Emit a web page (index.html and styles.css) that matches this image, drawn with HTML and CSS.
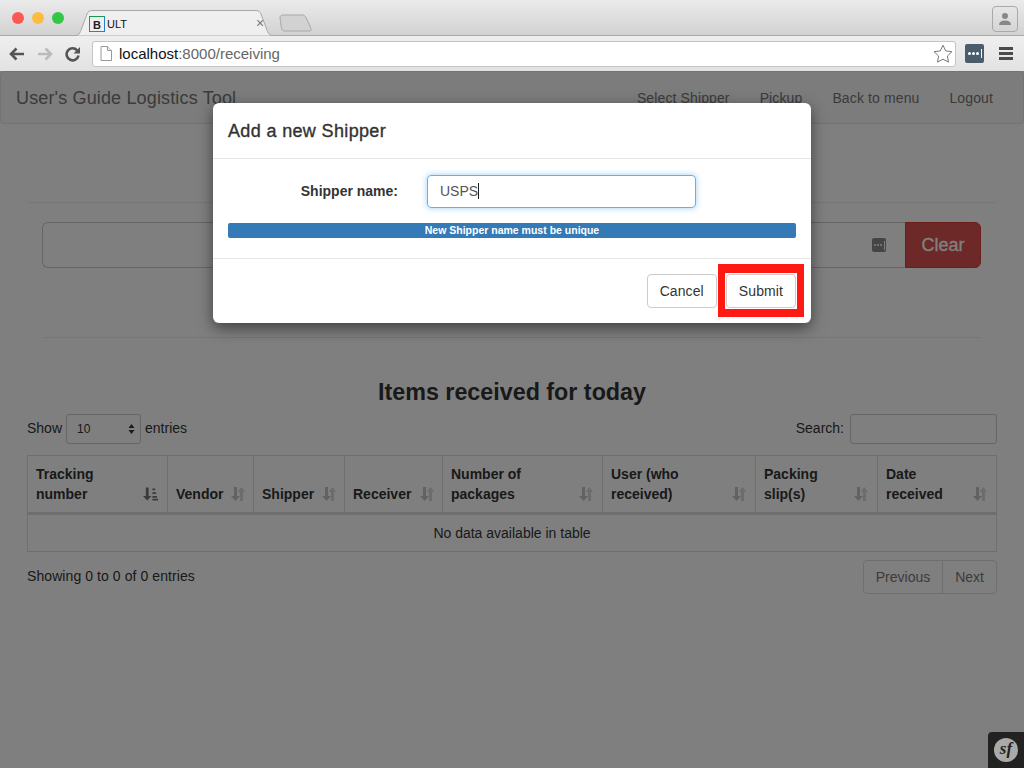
FILE: index.html
```html
<!DOCTYPE html>
<html lang="en">
<head>
    <meta charset="UTF-8">
    <title>ULT</title>
    <link rel="stylesheet" href="styles.css">
</head>
<body>
    <div class="tabbar">
        <div class="lights">
            <span class="light light-red"></span>
            <span class="light light-yellow"></span>
            <span class="light light-green"></span>
        </div>
        <div class="tab">
            <svg class="tab-shape" width="206" height="26" viewBox="0 0 206 26"><path d="M0 25.5h3c3 0 4.500-1.500 5.500-4L15 4c1-2.500 2.500-3.500 5-3.500h164c2.500 0 4 1 5 3.500l6.500 17.500c1 2.500 2.500 4 5.500 4h5" fill="#efefef" stroke="#a9a9a9"/></svg>
            <span class="favicon">B</span>
            <span class="tab-title">ULT</span>
            <span class="tab-close">×</span>
        </div>
        <svg class="newtab" width="34" height="18" viewBox="0 0 34 18"><path d="M1 4c0-2 1-3 3-3h19c2 0 3 .8 4 2.500l5 11c.6 1.500 0 2.500-2 2.500H6c-2 0-3-1-3.500-3z" fill="#d2d2d2" stroke="#a8a8a8"/></svg>
        <div class="profile">
            <svg width="14" height="14" viewBox="0 0 14 14"><circle cx="7" cy="4" r="3" fill="#888"/><path d="M1 13c0-3 2-4.500 6-4.500s6 1.500 6 4.500z" fill="#888"/></svg>
        </div>
    </div>
    <div class="toolbar">
        <svg class="tool" width="18" height="16" viewBox="0 0 18 16"><path d="M16 8H3M8.500 2.500L3 8l5.500 5.500" fill="none" stroke="#555" stroke-width="2.600"/></svg>
        <svg class="tool" width="18" height="16" viewBox="0 0 18 16"><path d="M2 8h13M9.500 2.500L15 8l-5.500 5.500" fill="none" stroke="#bbb" stroke-width="2.600"/></svg>
        <svg class="tool" width="18" height="16" viewBox="0 0 18 16"><path d="M14.500 9.500a6 6 0 1 1-1.400-5.200" fill="none" stroke="#555" stroke-width="2.600"/><path d="M16 1v6.500H9.500z" fill="#555"/></svg>
        <div class="urlbar">
            <svg width="12" height="15" viewBox="0 0 12 15"><path d="M1 .5h6.500l4 4v10H1z" fill="#fff" stroke="#999"/><path d="M7.500.5v4h4" fill="#eee" stroke="#999"/></svg>
            <span class="url"><span class="url-host">localhost</span>:8000/receiving</span>
            <svg class="star" width="20" height="19" viewBox="0 0 20 19"><path d="M10 1.200l2.700 5.700 6.200.8-4.500 4.300 1.100 6.100L10 15.200l-5.500 2.900 1.100-6.100L1.100 7.700l6.200-.8z" fill="#fff" stroke="#777"/></svg>
        </div>
        <div class="lastpass"><span></span><span></span><span></span><i></i></div>
        <div class="burger"><span></span><span></span><span></span></div>
    </div>

    <div class="page">
        <nav class="navbar">
            <a class="brand">User's Guide Logistics Tool</a>
            <div class="nav-links">
                <a>Select Shipper</a>
                <a>Pickup</a>
                <a>Back to menu</a>
                <a>Logout</a>
            </div>
        </nav>

        <div class="main">
            <hr class="rule-wide">
            <div class="scan-group">
                <div class="scan-input">
                    <div class="lastpass lastpass-small"><span></span><span></span><span></span><i></i></div>
                </div>
                <button class="btn-clear">Clear</button>
            </div>
            <hr class="rule-narrow">

            <h2 class="table-title">Items received for today</h2>

            <div class="table-controls">
                <div class="length">
                    <span class="length-text">Show</span>
                    <div class="select-box">
                        <span>10</span>
                        <svg width="7" height="12" viewBox="0 0 7 12"><path d="M3.500 1L6.500 5h-6zM3.500 11L.5 7h6z" fill="#333"/></svg>
                    </div>
                    <span class="length-text">entries</span>
                </div>
                <div class="length">
                    <span class="length-text">Search:</span>
                    <div class="search-box"></div>
                </div>
            </div>

            <table class="data-table">
                <colgroup>
                    <col class="col-1"><col class="col-2"><col class="col-3"><col class="col-4">
                    <col class="col-5"><col class="col-6"><col class="col-7"><col class="col-8">
                </colgroup>
                <thead>
                    <tr>
                        <th><div class="th-in"><span>Tracking number</span><svg class="sort-active" width="15" height="14" viewBox="0 0 16 14"><path d="M3 0h3v9h3l-4.500 5L0 9h3z" fill="#777"/><path d="M10 1h3v2h-3zM10 5h4v2h-4zM10 9h5v2h-5zM10 12h6v2h-6z" fill="#777"/></svg></div></th>
                        <th class="th-tight"><div class="th-in"><span>Vendor</span><svg class="sort" width="14" height="14" viewBox="0 0 14 14"><use href="#sort-icon"/></svg></div></th>
                        <th class="th-tight"><div class="th-in"><span>Shipper</span><svg class="sort" width="14" height="14" viewBox="0 0 14 14"><use href="#sort-icon"/></svg></div></th>
                        <th class="th-tight"><div class="th-in"><span>Receiver</span><svg class="sort" width="14" height="14" viewBox="0 0 14 14"><use href="#sort-icon"/></svg></div></th>
                        <th><div class="th-in"><span>Number of packages</span><svg class="sort" width="14" height="14" viewBox="0 0 14 14"><use href="#sort-icon"/></svg></div></th>
                        <th><div class="th-in"><span>User (who received)</span><svg class="sort" width="14" height="14" viewBox="0 0 14 14"><use href="#sort-icon"/></svg></div></th>
                        <th><div class="th-in"><span>Packing slip(s)</span><svg class="sort" width="14" height="14" viewBox="0 0 14 14"><use href="#sort-icon"/></svg></div></th>
                        <th><div class="th-in"><span>Date received</span><svg class="sort" width="14" height="14" viewBox="0 0 14 14"><use href="#sort-icon"/></svg></div></th>
                    </tr>
                </thead>
                <tbody>
                    <tr><td colspan="8">No data available in table</td></tr>
                </tbody>
            </table>

            <div class="table-footer">
                <div class="table-info">Showing 0 to 0 of 0 entries</div>
                <div class="pagination"><a>Previous</a><a>Next</a></div>
            </div>
        </div>

        <svg class="icon-defs" width="0" height="0">
            <symbol id="sort-icon" viewBox="0 0 14 14">
                <path d="M3 0h3v9h3l-4.500 5L0 9h3z" fill="#c4c4c4"/>
                <path d="M9 14V5H6.500L10.500 0 14 5h-2v9z" fill="#d8d8d8"/>
            </symbol>
        </svg>

        <div class="backdrop">
            <div class="modal">
                <div class="modal-header">Add a new Shipper</div>
                <div class="modal-body">
                    <div class="form-row">
                        <label class="form-label">Shipper name:</label>
                        <div class="form-input">USPS<span class="caret"></span></div>
                    </div>
                    <div class="progress">New Shipper name must be unique</div>
                </div>
                <div class="modal-footer">
                    <button class="btn">Cancel</button>
                    <button class="btn">Submit</button>
                    <div class="highlight"></div>
                </div>
            </div>
        </div>

        <div class="sf-toolbar"><span class="sf-logo">sf</span></div>
    </div>
</body>
</html>
```

FILE: styles.css
```css
* {
    box-sizing: border-box;
}

html, body {
    height: 100%;
}

body {
    margin: 0;
    font-family: "Liberation Sans", Arial, sans-serif;
    font-size: 14px;
    line-height: 20px;
    color: #333;
    background-color: white;
    display: flex;
    flex-direction: column;
    overflow: hidden;
}

/* browser chrome */
.tabbar {
    height: 36px;
    flex: none;
    display: flex;
    align-items: flex-end;
    padding-left: 12px;
    background: linear-gradient(#ebebeb, #d2d2d2);
    border-bottom: 1px solid #a9a9a9;
}

.lights {
    display: flex;
    gap: 8px;
    align-self: flex-start;
    margin-top: 12px;
}

.light {
    width: 12px;
    height: 12px;
    border-radius: 50%;
}

.light-red {
    background-color: #fc5753;
}

.light-yellow {
    background-color: #fdbc40;
}

.light-green {
    background-color: #33c748;
}

.tab {
    position: relative;
    width: 206px;
    height: 26px;
    margin-left: 8px;
    margin-bottom: -1px;
    display: flex;
    align-items: center;
    padding-left: 17px;
    padding-top: 1px;
    font-size: 11px;
    color: #111;
}

.tab-shape {
    position: absolute;
    left: 0;
    top: 0;
}

.favicon {
    position: relative;
    width: 16px;
    height: 16px;
    border: 1.500px solid #1a9a50;
    border-right-color: #2a7fc9;
    border-bottom-color: #2a7fc9;
    font-size: 11px;
    font-weight: bold;
    line-height: 16px;
    text-align: center;
    color: #222;
}

.tab-title {
    position: relative;
    margin-left: 2px;
}

.tab-close {
    position: absolute;
    left: 184px;
    top: 3px;
    font-size: 14px;
    color: #777;
}

.newtab {
    margin-left: 1px;
    margin-bottom: 3px;
}

.profile {
    margin-left: auto;
    margin-right: 6px;
    align-self: flex-start;
    margin-top: 6px;
    width: 26px;
    height: 26px;
    border: 1px solid #a9a9a9;
    border-radius: 4px;
    display: flex;
    align-items: center;
    justify-content: center;
}

.toolbar {
    height: 35px;
    flex: none;
    display: flex;
    align-items: center;
    padding-left: 8px;
    background: linear-gradient(#efefef, #e2e2e2);
}

.tool {
    margin-right: 10px;
}

.urlbar {
    width: 864px;
    height: 26px;
    padding: 0 2px 0 7px;
    display: flex;
    align-items: center;
    background-color: white;
    border: 1px solid #c4c4c4;
    border-radius: 3px;
    font-size: 15px;
}

.url {
    margin-left: 7px;
    color: #666;
}

.url-host {
    color: #111;
}

.star {
    margin-left: auto;
}

.lastpass {
    width: 19px;
    height: 19px;
    margin-left: 9px;
    background-color: #4b5c6d;
    border-radius: 2px;
    display: flex;
    align-items: center;
    justify-content: center;
    gap: 1px;
}

.lastpass span {
    width: 3px;
    height: 3px;
    border-radius: 50%;
    background-color: white;
}

.lastpass i {
    width: 1px;
    height: 9px;
    margin-left: 1px;
    background-color: white;
}

.burger {
    width: 14px;
    margin-left: 15px;
    display: flex;
    flex-direction: column;
    gap: 2px;
}

.burger span {
    height: 3px;
    background-color: #4a4a4a;
}

/* page under the modal */
.page {
    position: relative;
    flex: 1;
}

.navbar {
    height: 53px;
    display: flex;
    align-items: center;
    justify-content: space-between;
    padding: 0 30px 0 15px;
    background-color: #f8f8f8;
    border: 1px solid #e7e7e7;
    border-radius: 4px;
    color: #777;
}

.brand {
    font-size: 18px;
    letter-spacing: 0.15px;
}

.nav-links {
    display: flex;
    gap: 30px;
    font-size: 14px;
    letter-spacing: 0.12px;
}

.main {
    padding: 0 27px;
}

hr {
    border: 0;
    border-top: 1px solid #eee;
    margin: 0;
}

.rule-wide {
    margin: 78px 1px 19px;
}

.scan-group {
    display: flex;
    height: 46px;
    margin: 0 16px 0 15px;
}

.scan-input {
    flex: 1;
    display: flex;
    align-items: center;
    justify-content: flex-end;
    padding-right: 19px;
    border: 1px solid #ccc;
    border-right: 0;
    border-radius: 6px 0 0 6px;
}

.lastpass-small {
    width: 14px;
    height: 14px;
    margin: 0;
    background-color: #8a8a8a;
}

.lastpass-small span {
    width: 2px;
    height: 2px;
}

.btn-clear {
    width: 76px;
    border: 1px solid #d43f3a;
    border-radius: 0 6px 6px 0;
    background-color: #d9534f;
    color: white;
    font-family: inherit;
    font-size: 18px;
    -webkit-text-stroke: 0.3px white;
}

.rule-narrow {
    margin: 69px 15px 0;
}

.table-title {
    margin: 41px 0 0;
    font-size: 23.300px;
    line-height: 27px;
    text-align: center;
    font-weight: bold;
}

.table-controls {
    display: flex;
    justify-content: space-between;
    margin-top: 8px;
}

.length {
    display: flex;
    align-items: center;
    gap: 4px;
}

.length-text {
    margin-bottom: 2px;
}

.select-box {
    width: 75px;
    height: 30px;
    padding: 0 5px 0 10px;
    display: flex;
    align-items: center;
    justify-content: space-between;
    border: 1px solid #ccc;
    border-radius: 3px;
    font-size: 12px;
}

.search-box {
    width: 147px;
    height: 30px;
    margin-left: 2px;
    border: 1px solid #ccc;
    border-radius: 3px;
}

.data-table {
    width: 969px;
    margin-top: 11px;
    table-layout: fixed;
    border-collapse: collapse;
    border: 1px solid #ddd;
}

.col-1 { width: 140px; }
.col-2 { width: 86px; }
.col-3 { width: 91px; }
.col-4 { width: 98px; }
.col-5 { width: 160px; }
.col-6 { width: 153px; }
.col-7 { width: 122px; }
.col-8 { width: 119px; }

.data-table th {
    padding: 8px;
    text-align: left;
    vertical-align: bottom;
    border: 1px solid #ddd;
    border-bottom-width: 3px;
}

.data-table .th-tight {
    padding-right: 7px;
}

.th-in {
    display: flex;
    align-items: flex-end;
    justify-content: space-between;
}

.th-in span {
    max-width: 110px;
}

.th-in svg {
    flex: none;
    margin-bottom: 3px;
    margin-right: 1px;
}

.data-table td {
    padding: 8px;
    text-align: center;
}

.table-footer {
    display: flex;
    justify-content: space-between;
    margin-top: 8px;
}

.table-info {
    padding-top: 6px;
    letter-spacing: 0.08px;
}

.pagination {
    display: flex;
    height: 34px;
    color: #777;
}

.pagination a {
    padding: 6px 12px;
    border: 1px solid #ddd;
}

.pagination a:first-child {
    border-radius: 4px 0 0 4px;
}

.pagination a:last-child {
    margin-left: -1px;
    border-radius: 0 4px 4px 0;
}

.icon-defs {
    position: absolute;
}

/* modal */
.backdrop {
    position: absolute;
    inset: 0;
    display: flex;
    justify-content: center;
    align-items: flex-start;
    padding-top: 32px;
    background-color: rgba(0, 0, 0, 0.5);
}

.modal {
    width: 598px;
    background-color: white;
    border-radius: 6px;
    box-shadow: 0 5px 15px rgba(0, 0, 0, 0.5);
}

.modal-header {
    height: 56px;
    padding: 15px;
    font-size: 18px;
    line-height: 26px;
    letter-spacing: 0.35px;
    -webkit-text-stroke: 0.35px #333;
    border-bottom: 1px solid #e5e5e5;
}

.modal-body {
    height: 99px;
    padding: 16px 15px 0;
}

.form-row {
    display: flex;
    align-items: center;
}

.form-label {
    width: 170px;
    margin-bottom: 1px;
    text-align: right;
    font-weight: bold;
}

.form-input {
    width: 269px;
    height: 33px;
    margin-left: 29px;
    padding: 0 12px 2px;
    display: flex;
    align-items: center;
    color: #555;
    border: 1px solid #66afe9;
    border-radius: 4px;
    box-shadow: 0 0 6px rgba(102, 175, 233, 0.6);
}

.caret {
    width: 1px;
    height: 16px;
    background-color: #222;
}

.progress {
    height: 15px;
    margin-top: 15px;
    background-color: #337ab7;
    border-radius: 2px;
    color: white;
    font-size: 10.500px;
    font-weight: bold;
    line-height: 15px;
    text-align: center;
}

.modal-footer {
    position: relative;
    height: 65px;
    padding: 15px;
    display: flex;
    justify-content: flex-end;
    gap: 9px;
    border-top: 1px solid #e5e5e5;
}

.btn {
    height: 34px;
    padding: 6px 12px;
    background-color: white;
    border: 1px solid #ccc;
    border-radius: 4px;
    color: #333;
    font-family: inherit;
    font-size: 14px;
    letter-spacing: 0.1px;
}

.highlight {
    position: absolute;
    left: 505px;
    top: 5px;
    width: 86px;
    height: 53px;
    border: solid #fe1a12;
    border-width: 9px 7px 8px;
}

.sf-toolbar {
    position: absolute;
    right: 0;
    bottom: 0;
    width: 36px;
    height: 36px;
    display: flex;
    align-items: center;
    justify-content: center;
    background-color: #222;
    border-top-left-radius: 4px;
}

.sf-logo {
    width: 24px;
    height: 24px;
    border-radius: 50%;
    background-color: #aaa;
    color: #222;
    font-family: "Liberation Serif", serif;
    font-style: italic;
    font-weight: bold;
    font-size: 17px;
    line-height: 22px;
    text-align: center;
}
```
